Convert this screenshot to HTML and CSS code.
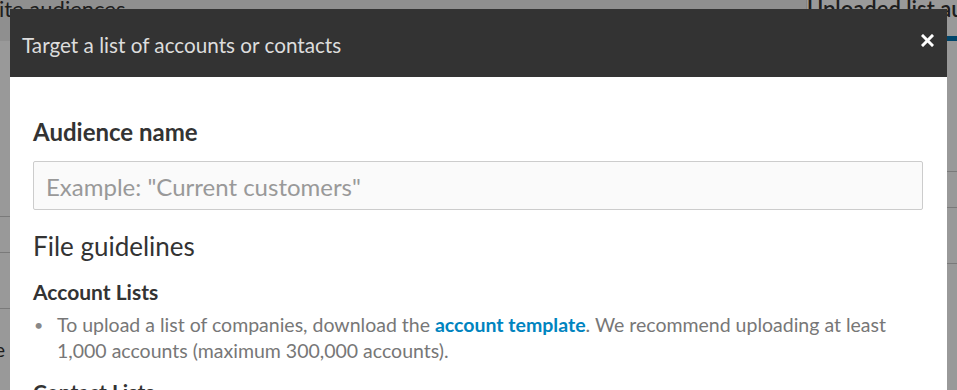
FILE: index.html
```html
<!DOCTYPE html>
<html>
<head>
    <link rel="stylesheet" href="styles.css">
</head>
<body>
    <!-- Page behind the overlay -->
    <div class="page">
        <div class="page-left">
            <div class="page-tab">Website audiences</div>
            <div class="page-rows">
                <div class="page-row"></div>
                <div class="page-row"></div>
                <div class="page-row page-row-tall"><span class="page-row-text">Some</span></div>
            </div>
        </div>
        <div class="page-right">
            <div class="page-tab page-tab-active">Uploaded list audiences</div>
            <div class="page-link">Upload list</div>
            <div class="page-rows">
                <div class="page-row page-row-head">Size</div>
                <div class="page-row">0</div>
                <div class="page-row">0</div>
            </div>
        </div>
    </div>

    <div class="overlay">
        <div class="modal">
            <div class="modal-header">
                <span class="modal-title">Target a list of accounts or contacts</span>
                <button class="modal-close">
                    <svg width="13" height="13" viewBox="0 0 13 13">
                        <path d="M2 2 L11 11 M11 2 L2 11" stroke="#fff" stroke-width="3" stroke-linecap="square"/>
                    </svg>
                </button>
            </div>
            <div class="modal-body">
                <label class="field-label" for="audience-name">Audience name</label>
                <input class="field-input" id="audience-name" type="text" placeholder='Example: "Current customers"'>
                <h2 class="section-title">File guidelines</h2>
                <h3 class="sub-title">Account Lists</h3>
                <ul class="guide-list">
                    <li><span>To upload a list of companies, download the <a href="#">account template</a>. We recommend uploading at least 1,000 accounts (maximum 300,000 accounts).</span></li>
                </ul>
                <h3 class="sub-title">Contact Lists</h3>
            </div>
        </div>
    </div>
</body>
</html>
```

FILE: styles.css
```css
/* Base */
html, body {
    margin: 0;
    height: 100%;
    overflow: hidden;
}

body {
    font-family: Lato, "Open Sans", sans-serif;
    background-color: #fff;
}

/* Page behind the overlay */
.page {
    display: flex;
    height: 100%;
}

.page-left {
    flex: 1;
    border-right: 1px solid #ddd;
}

.page-right {
    width: 150px;
}

.page-tab {
    height: 41px;
    background-color: #eee;
    color: #333;
    font-size: 22px;
    line-height: 18px;
    text-indent: -56px;
    box-sizing: border-box;
    white-space: nowrap;
    overflow: hidden;
}

.page-tab-active {
    background-color: #fff;
    text-indent: 0;
    border-bottom: 5px solid #0073b1;
    font-weight: 600;
}

.page-link {
    height: 130px;
    color: #0073b1;
    font-size: 22px;
    font-weight: 600;
    padding-top: 100px;
    box-sizing: border-box;
    text-indent: -120px;
    white-space: nowrap;
    overflow: hidden;
}

.page-left .page-rows {
    padding-top: 175px;
}

.page-row {
    border-top: 1px solid #ccc;
    height: 55px;
    font-size: 20px;
    color: #333;
    line-height: 55px;
    white-space: nowrap;
    overflow: hidden;
}

.page-left .page-row:first-child {
    height: 35px;
}

.page-row-tall {
    height: 90px;
}

.page-row-text {
    display: block;
    line-height: 20px;
    padding-top: 30px;
    text-indent: -44px;
}

.page-row-head {
    height: 35px;
    line-height: 35px;
    color: #999;
    font-size: 16px;
}

/* Overlay and modal */
.overlay {
    position: fixed;
    top: 0;
    left: 0;
    width: 100%;
    height: 100%;
    background-color: rgba(0, 0, 0, 0.4);
}

.modal {
    position: absolute;
    top: 9px;
    left: 10px;
    right: 10px;
    background-color: #fff;
}

.modal-header {
    background-color: #333;
    height: 68px;
    display: flex;
    align-items: center;
    justify-content: space-between;
    padding: 0 13px 0 12px;
}

.modal-title {
    color: #ddd;
    font-size: 20.7px;
    padding-top: 4px;
}

.modal-close {
    background: none;
    border: none;
    padding: 0;
    margin-top: -5px;
    display: flex;
    cursor: pointer;
}

.modal-body {
    padding: 42px 24px 0 23px;
    color: #333;
}

.field-label {
    display: block;
    font-size: 24px;
    font-weight: bold;
    line-height: 26px;
    margin-bottom: 16px;
}

.field-input {
    display: block;
    width: 100%;
    height: 49px;
    box-sizing: border-box;
    border: 1px solid #ccc;
    border-radius: 2px;
    background-color: #fafafa;
    padding: 2px 12px 0 12px;
    font-family: inherit;
    font-size: 24px;
    color: #333;
}

.field-input::placeholder {
    color: #999;
}

.section-title {
    font-size: 26px;
    font-weight: normal;
    line-height: 30px;
    margin: 21px 0 0 0;
}

.sub-title {
    font-size: 21px;
    font-weight: bold;
    line-height: 24px;
    margin: 19px 0 0 0;
}

.guide-list {
    list-style: none;
    margin: 8px 0 0 0;
    padding: 0;
    color: #777;
    font-size: 19.5px;
    line-height: 26px;
}

.guide-list li {
    display: grid;
    grid-template-columns: 24px 1fr;
}

.guide-list li::before {
    content: "\2022";
    font-size: 16px;
    color: #888;
    padding-left: 1px;
}

.guide-list a {
    color: #0084bf;
    font-weight: bold;
    text-decoration: none;
}

.guide-list + .sub-title {
    margin-top: 16px;
}
```
